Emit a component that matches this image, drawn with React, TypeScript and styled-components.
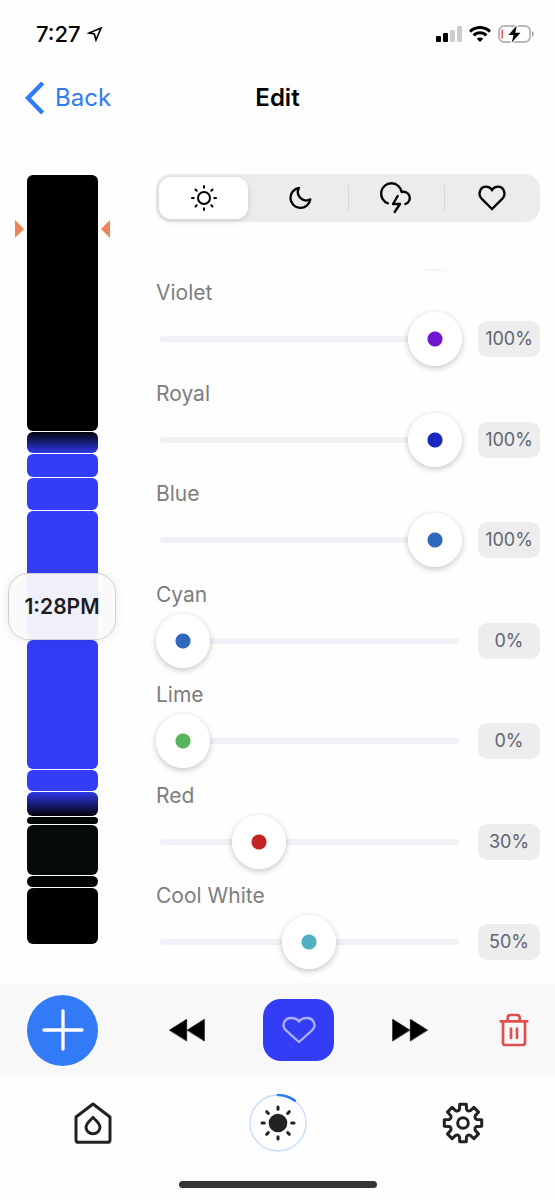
import React, { useState } from "react";
import styled, { createGlobalStyle } from "styled-components";

const BLUE = "#2f7bf6";
const INDIGO = "#333df5";

const GlobalStyle = createGlobalStyle`
  *, *::before, *::after { box-sizing: border-box; }
  body {
    margin: 0;
    background: #fefefe;
    color: #000;
    font-family: Inter, "Liberation Sans", sans-serif;
  }
  button { border: 0; padding: 0; background: none; font: inherit; color: inherit; cursor: pointer; }
`;

const Screen = styled.div`
  display: flex;
  flex-direction: column;
  min-height: 100vh;
`;

const StatusBar = styled.div`
  display: flex;
  align-items: center;
  justify-content: space-between;
  height: 68px;
  padding: 0 20px 0 36px;
`;

const StatusGroup = styled.div<{ $gap: number }>`
  display: flex;
  align-items: center;
  gap: ${(p) => p.$gap}px;
`;

const Clock = styled.span`
  font-size: 22px;
  line-height: 24px;
  font-weight: 500;
`;

const NavBar = styled.header`
  display: grid;
  grid-template-columns: 1fr auto 1fr;
  align-items: center;
  height: 60px;
  padding: 0 24px;
`;

const BackButton = styled.button`
  display: flex;
  align-items: center;
  gap: 9px;
  color: ${BLUE};
  font-size: 24px;
  line-height: 32px;
`;

const Title = styled.h1`
  margin: 0;
  font-size: 24px;
  line-height: 32px;
  font-weight: 600;
`;

const Main = styled.main`
  display: flex;
  flex: 1;
  gap: 58px;
  padding: 46px 15px 0 27px;
`;

const Sidebar = styled.aside`
  position: relative;
  flex: none;
  width: 71px;
  padding: 1px 0 39px;
`;

const Timeline = styled.div`
  display: flex;
  flex-direction: column;
  gap: 1px;
`;

const Block = styled.div<{ $height: number; $fill: string }>`
  height: ${(p) => p.$height}px;
  border-radius: 6px;
  background: ${(p) => p.$fill};
`;

const Marker = styled.svg<{ $side: "left" | "right" }>`
  position: absolute;
  top: 46px;
  ${(p) => p.$side}: -12px;
  fill: #f08457;
`;

const TimeChip = styled.div`
  position: absolute;
  top: 399px;
  left: -19px;
  display: flex;
  align-items: center;
  justify-content: center;
  width: 108px;
  height: 67px;
  border: 1px solid #cdcfd0;
  border-radius: 20px;
  background: rgba(250, 250, 250, 0.95);
  box-shadow: 0 0 10px rgba(0, 0, 0, 0.09);
  color: #1c1c1e;
  font-size: 21px;
  font-weight: 600;
`;

const Panel = styled.section`
  display: flex;
  flex: 1;
  flex-direction: column;
  min-width: 0;
`;

const Segmented = styled.div`
  display: grid;
  grid-template-columns: repeat(4, 1fr);
  height: 48px;
  border-radius: 15px;
  background: #ececec;
`;

const Segment = styled.label<{ $active: boolean; $divider: boolean }>`
  display: flex;
  align-items: center;
  justify-content: center;
  margin: ${(p) => (p.$active ? "3px 4px 3px 3px" : "0")};
  border-radius: 12px;
  background: ${(p) =>
    p.$active
      ? "#fff"
      : p.$divider
        ? "linear-gradient(#d6d6d6, #d6d6d6) left center / 1px 26px no-repeat"
        : "none"};
  box-shadow: ${(p) => (p.$active ? "0 2px 6px rgba(0, 0, 0, 0.14)" : "none")};
  cursor: pointer;
`;

const HiddenRadio = styled.input`
  position: absolute;
  opacity: 0;
  pointer-events: none;
`;

const Channels = styled.div`
  position: relative;
  display: flex;
  flex: 1;
  flex-direction: column;
  justify-content: space-between;
  margin: 47px -12px 0;
  padding: 12px 12px 14px;
  overflow: hidden;
`;

const ScrolledThumb = styled.span`
  position: absolute;
  top: -58px;
  right: 90px;
  width: 54px;
  height: 54px;
  border-radius: 50%;
  box-shadow: 0 2px 7px rgba(0, 0, 0, 0.24);
`;

const Channel = styled.div`
  display: flex;
  flex-direction: column;
  gap: 7px;
`;

const ChannelLabel = styled.label`
  color: #7d7d7d;
  font-size: 21px;
  line-height: 24px;
`;

const ChannelRow = styled.div`
  display: flex;
  align-items: center;
  gap: 16px;
`;

const SliderBox = styled.div`
  display: grid;
  flex: 1;
  align-items: center;
`;

const Track = styled.span`
  grid-area: 1 / 1;
  height: 6px;
  margin: 0 3px 0 4px;
  border-radius: 3px;
  background: #f0f0f6;
`;

const Slider = styled.input<{ $color: string }>`
  grid-area: 1 / 1;
  width: 100%;
  height: 54px;
  margin: 0;
  appearance: none;
  background: none;
  cursor: pointer;

  &::-webkit-slider-thumb {
    appearance: none;
    width: 54px;
    height: 54px;
    border-radius: 50%;
    background: radial-gradient(circle, ${(p) => p.$color} 7px, #fff 8px);
    box-shadow: 0 2px 6px rgba(0, 0, 0, 0.24);
  }
`;

const Percent = styled.output`
  width: 62px;
  border-radius: 9px;
  background: #ededed;
  color: #5f6470;
  font-size: 18px;
  line-height: 36px;
  text-align: center;
`;

const Toolbar = styled.div`
  display: flex;
  align-items: center;
  justify-content: space-between;
  height: 94px;
  padding: 0 26px 0 27px;
  background: #f8f8f8;
`;

const Transport = styled.div`
  display: flex;
  align-items: center;
  gap: 58px;
`;

const IconButton = styled.button`
  display: flex;
`;

const AddButton = styled(IconButton)`
  align-items: center;
  justify-content: center;
  width: 71px;
  height: 71px;
  border-radius: 50%;
  background: #337bf6;
`;

const FavouriteButton = styled(IconButton)`
  align-items: center;
  justify-content: center;
  width: 71px;
  height: 62px;
  border-radius: 18px;
  background: ${INDIGO};
  color: #abb0fb;
`;

const TabBar = styled.nav`
  display: grid;
  grid-template-columns: repeat(3, 1fr);
  place-items: center;
  height: 92px;
`;

const TabLink = styled.a`
  display: flex;
  color: #222;
`;

const HomeIndicator = styled.div`
  height: 31px;
  padding-top: 12px;

  &::after {
    content: "";
    display: block;
    width: 198px;
    height: 7px;
    margin: 0 auto;
    border-radius: 4px;
    background: #333434;
  }
`;

/* Line icons are drawn around the origin, three units to a pixel. */
type GlyphProps = {
  w: number;
  h?: number;
  stroke?: number;
  color?: string;
  children: React.ReactNode;
};

function Glyph({ w, h = w, stroke = 7, color = "currentColor", children }: GlyphProps) {
  return (
    <svg
      width={w}
      height={h}
      viewBox={`${-w * 1.5} ${-h * 1.5} ${w * 3} ${h * 3}`}
      fill="none"
      stroke={color}
      strokeWidth={stroke}
      strokeLinecap="round"
      strokeLinejoin="round"
      aria-hidden="true"
    >
      {children}
    </svg>
  );
}

const rays = [0, 45, 90, 135, 180, 225, 270, 315];

const SunIcon = () => (
  <Glyph w={32} stroke={6}>
    <circle r="18" />
    {rays.map((a) => (
      <path key={a} d="M0 -31V-36" transform={`rotate(${a})`} />
    ))}
  </Glyph>
);

const MoonIcon = () => (
  <Glyph w={32}>
    <path d="M-3 -30A30 30 0 1 0 31 4A25 25 0 0 1 -3 -30Z" />
  </Glyph>
);

const StormIcon = () => (
  <Glyph w={36}>
    <path d="M-24 16A31 31 0 1 1 17 -18A18 18 0 1 1 28 18" />
    <path d="M5 -6L-9 18H12L-4 42" />
  </Glyph>
);

const HeartIcon = () => (
  <Glyph w={32}>
    <path
      d="M0 33L-32 1C-43 -11 -36 -34 -18 -34C-9 -34 -3 -29 0 -24C3 -29 9 -34 18 -34C36 -34 43 -11 32 1Z"
      strokeLinejoin="miter"
    />
  </Glyph>
);

const LargeHeartIcon = () => (
  <Glyph w={38}>
    <path d="M0 36L-39 1C-53 -11 -46 -36 -23 -36C-11 -36 -4 -31 0 -25C4 -31 11 -36 23 -36C46 -36 53 -11 39 1Z" />
  </Glyph>
);

const gearPath = (() => {
  const pt = (deg: number, r: number) => {
    const t = ((deg - 90) * Math.PI) / 180;
    return `${(r * Math.cos(t)).toFixed(1)} ${(r * Math.sin(t)).toFixed(1)}`;
  };
  return (
    rays
      .map(
        (a, i) =>
          `${i ? "L" : "M"}${pt(a - 14, 43)}L${pt(a - 10, 57)}L${pt(a + 10, 57)}L${pt(a + 14, 43)}Q${pt(a + 22, 36)} ${pt(a + 31, 43)}`
      )
      .join("") + "Z"
  );
})();

const modes = [
  { id: "day", label: "Day", Icon: SunIcon },
  { id: "night", label: "Night", Icon: MoonIcon },
  { id: "storm", label: "Storm", Icon: StormIcon },
  { id: "favourite", label: "Favourite", Icon: HeartIcon },
];

const blocks = [
  { height: 256, fill: "#000" },
  { height: 21, fill: "linear-gradient(#02030c, #2f38e6)" },
  { height: 23, fill: INDIGO },
  { height: 32, fill: INDIGO },
  { height: 128, fill: INDIGO },
  { height: 129, fill: INDIGO },
  { height: 21, fill: INDIGO },
  { height: 24, fill: "linear-gradient(#2f38ea, #02020a)" },
  { height: 7, fill: "#040707" },
  { height: 50, fill: "#050a0b" },
  { height: 11, fill: "#020404" },
  { height: 56, fill: "#000" },
];

const initialChannels = [
  { name: "Violet", color: "#7016cf", value: 100 },
  { name: "Royal", color: "#1a29bd", value: 100 },
  { name: "Blue", color: "#2f68bd", value: 100 },
  { name: "Cyan", color: "#2f68bd", value: 0 },
  { name: "Lime", color: "#58b55d", value: 0 },
  { name: "Red", color: "#c02522", value: 30 },
  { name: "Cool White", color: "#50b0c2", value: 50 },
];

export default function App() {
  const [mode, setMode] = useState("day");
  const [channels, setChannels] = useState(initialChannels);

  const setValue = (index: number, value: number) =>
    setChannels((list) => list.map((c, i) => (i === index ? { ...c, value } : c)));

  return (
    <Screen>
      <GlobalStyle />
      <StatusBar>
        <StatusGroup $gap={6}>
          <Clock>7:27</Clock>
          <Glyph w={16} stroke={5} color="#000">
            <path d="M18 -18L3 18L-2 0L-18 -3Z" strokeLinejoin="miter" />
          </Glyph>
        </StatusGroup>
        <StatusGroup $gap={7}>
          <svg width="26" height="16" viewBox="0 0 26 16" aria-hidden="true">
            <rect x="0" y="10" width="5" height="6" rx="1" />
            <rect x="7" y="7" width="5" height="9" rx="1" />
            <rect x="14" y="4" width="5" height="12" rx="1" fill="#ccc" />
            <rect x="21" y="0" width="5" height="16" rx="1" fill="#ccc" />
          </svg>
          <svg width="22" height="16" viewBox="0 0 22 16" fill="none" stroke="#000" strokeWidth="3" aria-hidden="true">
            <path d="M1 5.6A14.2 14.2 0 0 1 21 5.6" />
            <path d="M4.6 9.4A9 9 0 0 1 17.4 9.4" />
            <path d="M11 16L7.8 12.7A4.6 4.6 0 0 1 14.2 12.7Z" fill="#000" stroke="none" />
          </svg>
          <svg width="37" height="18" viewBox="0 0 37 18" fill="none" aria-hidden="true">
            <rect x="1" y="1" width="31" height="16" rx="5" stroke="#a2a2a2" strokeWidth="1.4" />
            <path d="M34 6.2C36.4 7 36.4 11 34 11.8Z" fill="#a2a2a2" />
            <path d="M4.2 4.5V13.5" stroke="#f0453a" strokeWidth="1.4" />
            <path
              d="M18.8 0.5L10.5 10H15.5L13.8 17.5L22.5 7.8H17.3Z"
              fill="#000"
              stroke="#fefefe"
              strokeWidth="2.4"
              paintOrder="stroke"
            />
          </svg>
        </StatusGroup>
      </StatusBar>

      <NavBar>
        <BackButton type="button">
          <Glyph w={22} h={36} stroke={13}>
            <path d="M23 -45L-21 0L23 45" strokeLinecap="butt" strokeLinejoin="miter" />
          </Glyph>
          Back
        </BackButton>
        <Title>Edit</Title>
      </NavBar>

      <Main>
        <Sidebar>
          <Timeline>
            {blocks.map((b, i) => (
              <Block key={i} $height={b.height} $fill={b.fill} />
            ))}
          </Timeline>
          <Marker $side="left" width="9" height="18" viewBox="0 0 9 18" aria-hidden="true">
            <path d="M0 0L9 9L0 18Z" />
          </Marker>
          <Marker $side="right" width="9" height="18" viewBox="0 0 9 18" aria-hidden="true">
            <path d="M9 0L0 9L9 18Z" />
          </Marker>
          <TimeChip>1:28PM</TimeChip>
        </Sidebar>

        <Panel>
          <Segmented role="radiogroup" aria-label="Mode">
            {modes.map(({ id, label, Icon }, i) => (
              <Segment key={id} $active={mode === id} $divider={i > 0 && modes[i - 1].id !== mode}>
                <HiddenRadio
                  type="radio"
                  name="mode"
                  aria-label={label}
                  checked={mode === id}
                  onChange={() => setMode(id)}
                />
                <Icon />
              </Segment>
            ))}
          </Segmented>

          <Channels>
            <ScrolledThumb />
            {channels.map((c, i) => {
              const id = `channel-${i}`;
              return (
                <Channel key={c.name}>
                  <ChannelLabel htmlFor={id}>{c.name}</ChannelLabel>
                  <ChannelRow>
                    <SliderBox>
                      <Track />
                      <Slider
                        id={id}
                        type="range"
                        min={0}
                        max={100}
                        value={c.value}
                        $color={c.color}
                        onChange={(e) => setValue(i, Number(e.target.value))}
                      />
                    </SliderBox>
                    <Percent htmlFor={id}>{c.value}%</Percent>
                  </ChannelRow>
                </Channel>
              );
            })}
          </Channels>
        </Panel>
      </Main>

      <Toolbar>
        <AddButton type="button" aria-label="Add">
          <Glyph w={44} stroke={10} color="#fff">
            <path d="M0 -57V57M-57 0H57" />
          </Glyph>
        </AddButton>
        <Transport>
          <IconButton type="button" aria-label="Previous">
            <Glyph w={36} h={24} stroke={2}>
              <path d="M-52 0L-1 -32V32ZM1 0L52 -32V32Z" fill="currentColor" />
            </Glyph>
          </IconButton>
          <FavouriteButton type="button" aria-label="Favourite">
            <LargeHeartIcon />
          </FavouriteButton>
          <IconButton type="button" aria-label="Next">
            <Glyph w={36} h={24} stroke={2}>
              <path d="M52 0L1 -32V32ZM-1 0L-52 -32V32Z" fill="currentColor" />
            </Glyph>
          </IconButton>
        </Transport>
        <IconButton type="button" aria-label="Delete">
          <Glyph w={30} h={36} stroke={8} color="#df4f50">
            <path d="M-40 -26H40M-19 -27V-36Q-19 -45 -11 -45H9Q17 -45 17 -36V-27" />
            <path d="M-33 -25V38Q-33 45 -25 45H25Q33 45 33 38V-25M-9 -4V24M9 -4V24" />
          </Glyph>
        </IconButton>
      </Toolbar>

      <TabBar>
        <TabLink href="#home" aria-label="Home">
          <Glyph w={42} stroke={9}>
            <path d="M0 -57L51 -18V50Q51 58 43 58H-43Q-51 58 -51 50V-18Z" />
            <path d="M0 -17C-6 -9 -21 0 -21 13A21 19 0 0 0 21 13C21 0 6 -9 0 -17Z" />
          </Glyph>
        </TabLink>
        <TabLink href="#light" aria-label="Light" aria-current="page">
          <Glyph w={60} stroke={9}>
            <circle r="84" stroke="#c6dcfd" strokeWidth="4" />
            <path d="M0 -84A84 84 0 0 1 50 -67" stroke={BLUE} strokeWidth="8" />
            <circle r="28" fill="currentColor" stroke="none" />
            {rays.map((a) => (
              <path key={a} d="M0 -41V-48" transform={`rotate(${a})`} />
            ))}
          </Glyph>
        </TabLink>
        <TabLink href="#settings" aria-label="Settings">
          <Glyph w={42} stroke={9}>
            <path d={gearPath} />
            <circle r="16" />
          </Glyph>
        </TabLink>
      </TabBar>
      <HomeIndicator />
    </Screen>
  );
}
